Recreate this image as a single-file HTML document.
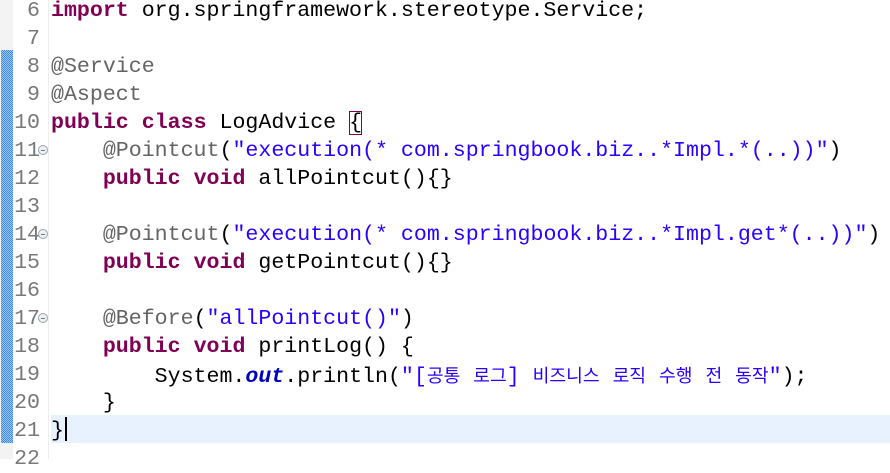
<!DOCTYPE html>
<html><head><meta charset="utf-8"><style>
html,body{margin:0;padding:0;width:890px;height:459px;overflow:hidden;background:#fff;}
.gut0{position:absolute;left:0;top:0;width:13px;height:459px;background:#f3f3f3;}
.chg{position:absolute;left:1px;top:50px;width:12px;height:393px;
 background-color:#9cc3f5;
 background-image:linear-gradient(45deg,#3d8ee8 25%,transparent 25%,transparent 75%,#3d8ee8 75%),linear-gradient(45deg,#3d8ee8 25%,transparent 25%,transparent 75%,#3d8ee8 75%);
 background-size:2px 2px;background-position:0 0,1px 1px;}
.sep{position:absolute;left:48px;top:0;width:1px;height:459px;background:#eeeeee;}
.cur{position:absolute;left:51px;top:415px;width:839px;height:28px;background:#e8f2fe;}
.ln{position:absolute;left:0;width:40px;text-align:right;color:#787878;font:21.6px/28px "Liberation Mono",monospace;}
.code{position:absolute;left:51px;white-space:pre;font:21.6px/28px "Liberation Mono",monospace;color:#000;}
.k{color:#7f0055;font-weight:bold}
.a{color:#646464}
.s{color:#2a00ff}
.o{color:#0000c0;font-weight:bold;font-style:italic}
.kr{font-family:"Noto Sans CJK KR","NanumGothic",sans-serif;font-size:18.2px;}
.fold{position:absolute;left:38px;width:8px;height:8px;border:1px solid #9aa3ad;border-radius:50%;background:#eef1f4;}
.fold:after{content:"";position:absolute;left:2px;top:3.5px;width:4px;height:1px;background:#6d7780;}
.br{outline:1.5px solid #7f0055;outline-offset:-1px}
.caret{display:inline-block;width:2px;height:24px;background:#000;vertical-align:-5px;margin-left:1px}
</style></head><body>
<div class="gut0"></div>
<div class="chg"></div>
<div class="sep"></div>
<div class="cur"></div>
<div class="ln" style="top:-3px">6</div>
<div class="ln" style="top:25px">7</div>
<div class="ln" style="top:53px">8</div>
<div class="ln" style="top:81px">9</div>
<div class="ln" style="top:109px">10</div>
<div class="ln" style="top:137px">11</div>
<div class="ln" style="top:165px">12</div>
<div class="ln" style="top:193px">13</div>
<div class="ln" style="top:221px">14</div>
<div class="ln" style="top:249px">15</div>
<div class="ln" style="top:277px">16</div>
<div class="ln" style="top:305px">17</div>
<div class="ln" style="top:333px">18</div>
<div class="ln" style="top:361px">19</div>
<div class="ln" style="top:389px">20</div>
<div class="ln" style="top:417px">21</div>
<div class="ln" style="top:445px">22</div>
<div class="fold" style="top:145px"></div>
<div class="fold" style="top:229px"></div>
<div class="fold" style="top:313px"></div>
<div class="code" style="top:-3px"><span class="k">import</span> org.springframework.stereotype.Service;</div>
<div class="code" style="top:53px"><span class="a">@Service</span></div>
<div class="code" style="top:81px"><span class="a">@Aspect</span></div>
<div class="code" style="top:109px"><span class="k">public</span> <span class="k">class</span> LogAdvice <span class="br">{</span></div>
<div class="code" style="top:137px">    <span class="a">@Pointcut</span>(<span class="s">"execution(* com.springbook.biz..*Impl.*(..))"</span>)</div>
<div class="code" style="top:165px">    <span class="k">public</span> <span class="k">void</span> allPointcut(){}</div>
<div class="code" style="top:221px">    <span class="a">@Pointcut</span>(<span class="s">"execution(* com.springbook.biz..*Impl.get*(..))"</span>)</div>
<div class="code" style="top:249px">    <span class="k">public</span> <span class="k">void</span> getPointcut(){}</div>
<div class="code" style="top:305px">    <span class="a">@Before</span>(<span class="s">"allPointcut()"</span>)</div>
<div class="code" style="top:333px">    <span class="k">public</span> <span class="k">void</span> printLog() {</div>
<div class="code" style="top:361px">        System.<span class="o">out</span>.println(<span class="s">"[<span class="kr">공통</span> <span class="kr">로그</span>] <span class="kr">비즈니스</span> <span class="kr">로직</span> <span class="kr">수행</span> <span class="kr">전</span> <span class="kr">동작</span>"</span>);</div>
<div class="code" style="top:389px">    }</div>
<div class="code" style="top:417px">}<span class="caret"></span></div>
</body></html>
